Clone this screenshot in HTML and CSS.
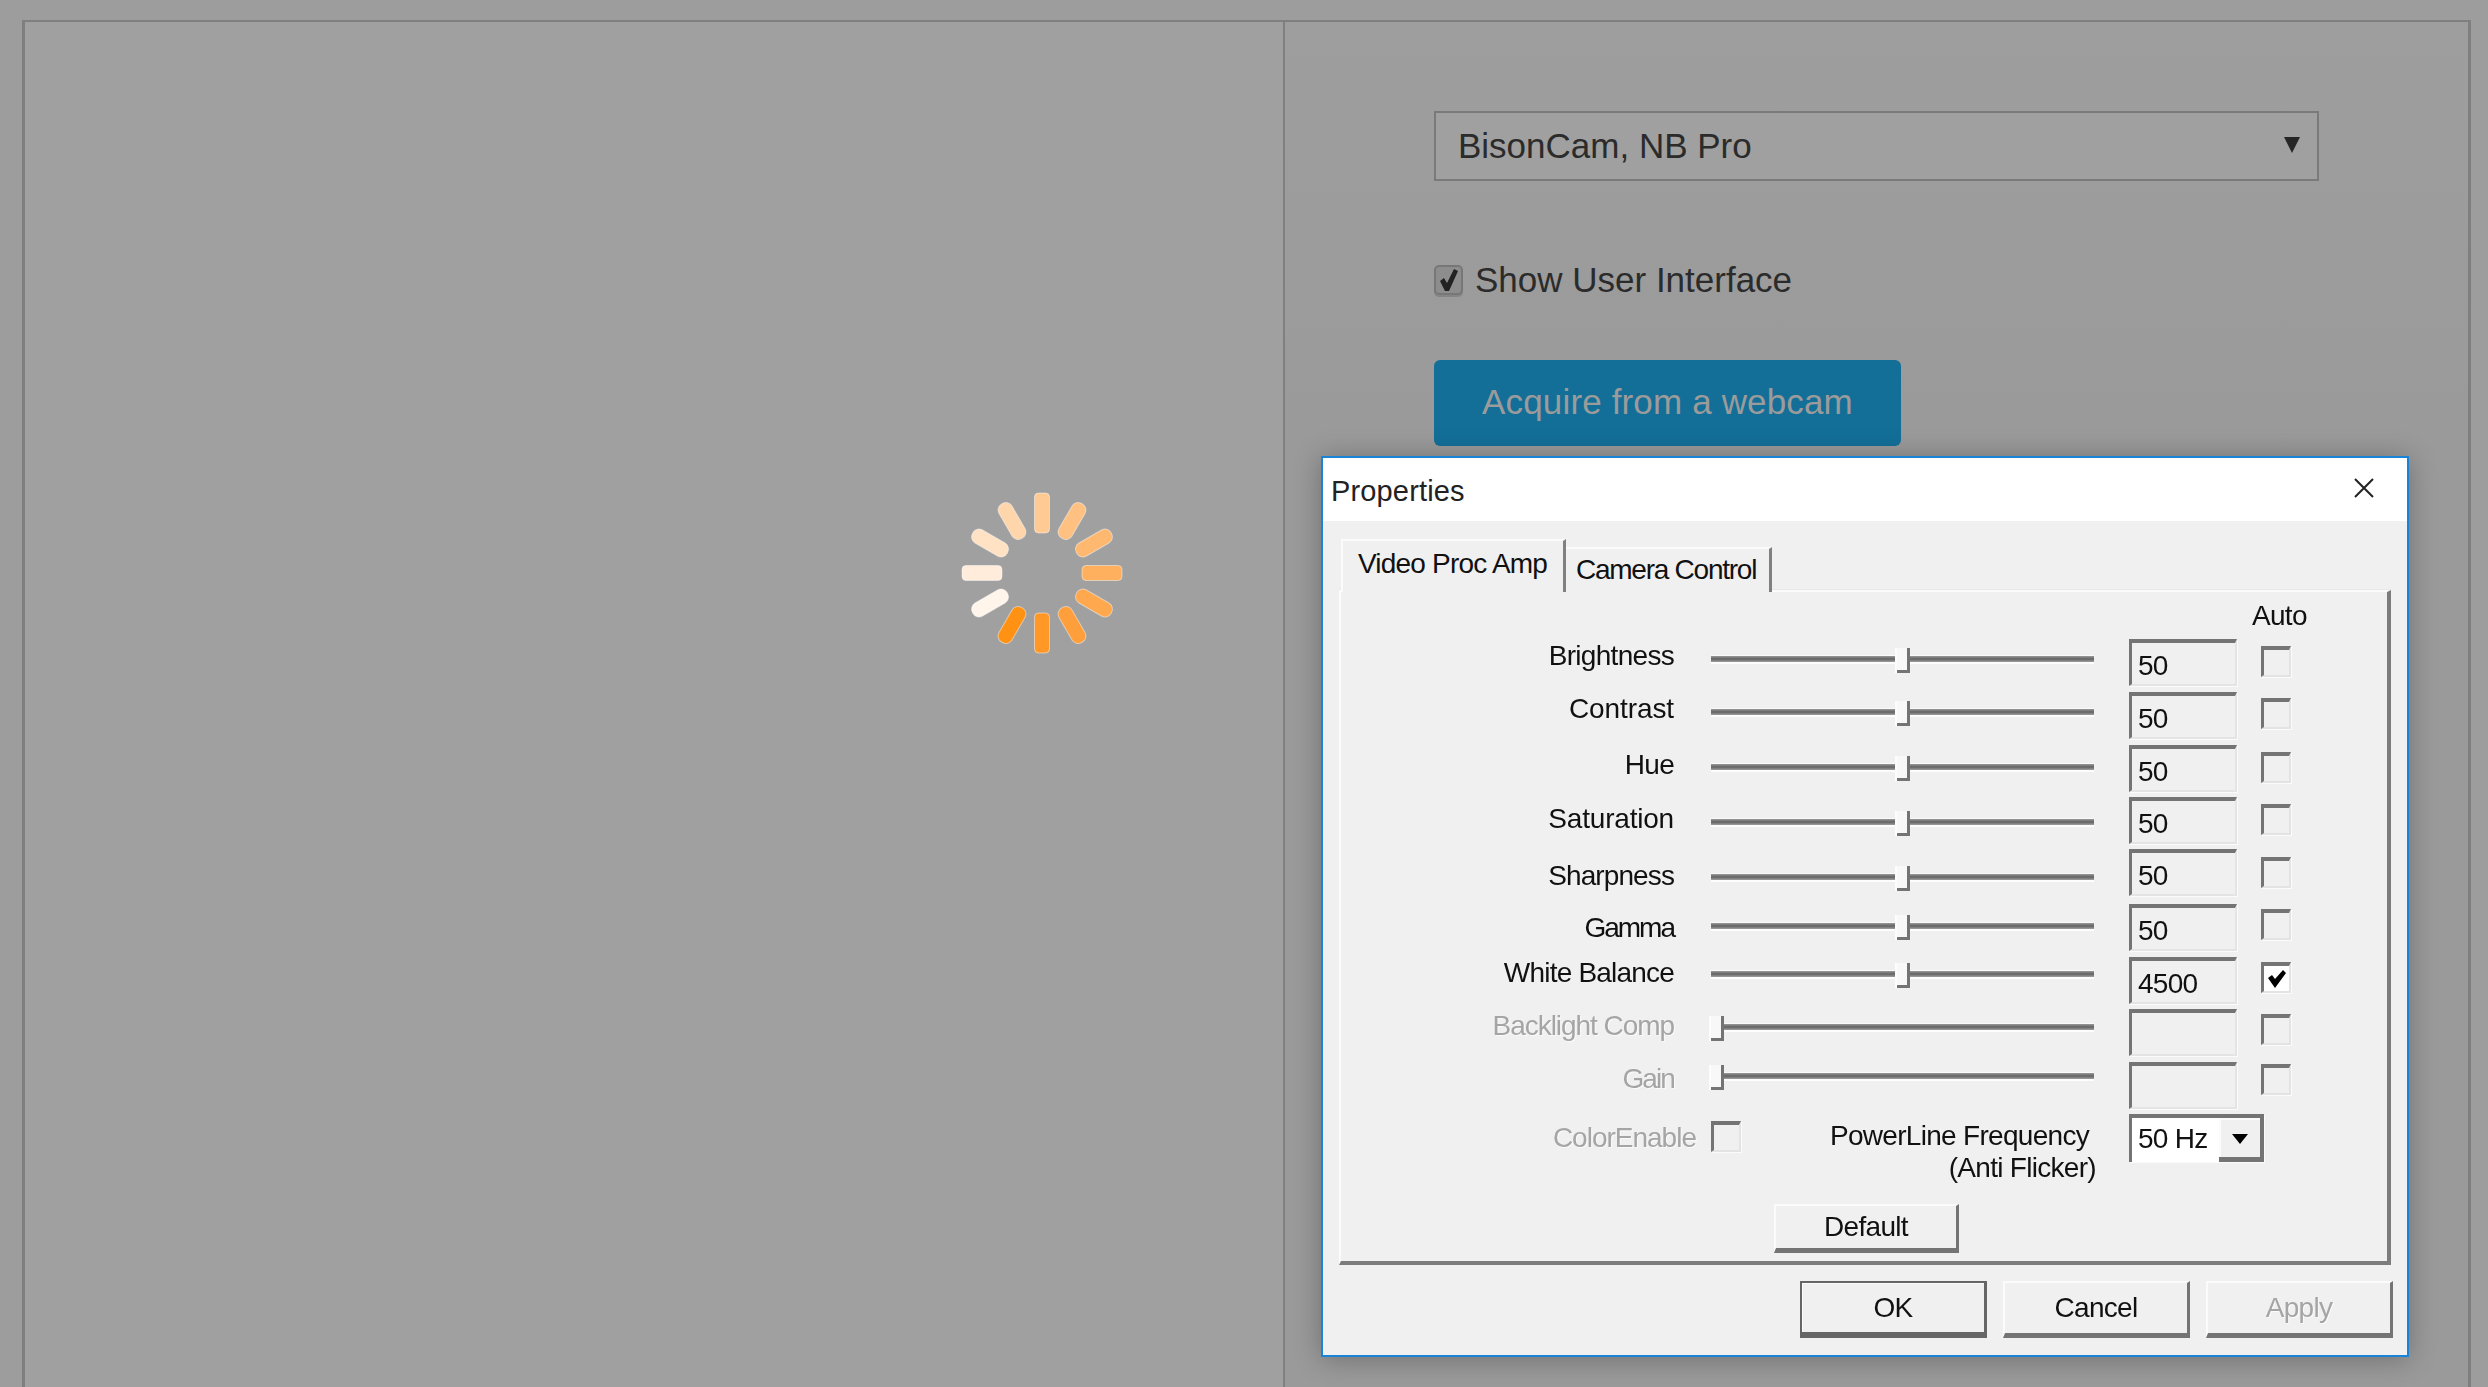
FILE: index.html
```html
<!DOCTYPE html>
<html lang="en">
<head>
<meta charset="utf-8">
<title>Properties</title>
<link rel="stylesheet" href="styles.css">
</head>
<body>
<main class="frame">
  <section class="left">
    <svg class="spinner" viewBox="-82 -82 164 164" width="164" height="164" aria-hidden="true">
      <rect class="bar" x="-7.5" y="-80" width="15" height="40" rx="4" fill="#ffca94"/>
      <rect class="bar" x="-7.5" y="-80" width="15" height="40" rx="7" fill="#ffc182" transform="rotate(30)"/>
      <rect class="bar" x="-7.5" y="-80" width="15" height="40" rx="7" fill="#ffb870" transform="rotate(60)"/>
      <rect class="bar" x="-7.5" y="-80" width="15" height="40" rx="4" fill="#ffb05f" transform="rotate(90)"/>
      <rect class="bar" x="-7.5" y="-80" width="15" height="40" rx="7" fill="#ffa84e" transform="rotate(120)"/>
      <rect class="bar" x="-7.5" y="-80" width="15" height="40" rx="7" fill="#ff9f3b" transform="rotate(150)"/>
      <rect class="bar" x="-7.5" y="-80" width="15" height="40" rx="4" fill="#ff9827" transform="rotate(180)"/>
      <rect class="bar" x="-7.5" y="-80" width="15" height="40" rx="7" fill="#ff9213" transform="rotate(210)"/>
      <rect class="bar" x="-7.5" y="-80" width="15" height="40" rx="7" fill="#fff5ea" transform="rotate(240)"/>
      <rect class="bar" x="-7.5" y="-80" width="15" height="40" rx="4" fill="#ffecda" transform="rotate(270)"/>
      <rect class="bar" x="-7.5" y="-80" width="15" height="40" rx="7" fill="#ffe1c4" transform="rotate(300)"/>
      <rect class="bar" x="-7.5" y="-80" width="15" height="40" rx="7" fill="#ffd5ac" transform="rotate(330)"/>
    </svg>
  </section>
  <section class="right">
    <div class="select">
      <span>BisonCam, NB Pro</span>
      <svg class="select-arrow" viewBox="0 0 16 16" width="16" height="16" aria-hidden="true"><path d="M0 0H16L8 16Z"/></svg>
    </div>
    <label class="show-ui">
      <span class="page-check">
        <svg viewBox="0 0 20 22" width="20" height="22" aria-hidden="true"><path d="M1 12l4-3 3 5 7-14 4 2-9 20h-4z"/></svg>
      </span>
      <span>Show User Interface</span>
    </label>
    <button class="acquire" type="button">Acquire from a webcam</button>
  </section>
</main>

<div class="dialog">
  <header class="titlebar">
    <span class="title">Properties</span>
    <svg class="close" viewBox="0 0 20 20" width="20" height="20" aria-hidden="true"><path d="M1 1L19 19M19 1L1 19"/></svg>
  </header>
  <div class="dialog-body">
    <div class="tabs">
      <div class="tab tab-active">Video Proc Amp</div>
      <div class="tab">Camera Control</div>
    </div>
    <div class="panel">
      <div class="auto-head">Auto</div>

      <div class="row r1">
        <div class="label">Brightness</div>
        <div class="slider"><div class="track"></div><div class="thumb"></div></div>
        <div class="edit">50</div>
        <div class="check"></div>
      </div>
      <div class="row r2">
        <div class="label">Contrast</div>
        <div class="slider"><div class="track"></div><div class="thumb"></div></div>
        <div class="edit">50</div>
        <div class="check"></div>
      </div>
      <div class="row r3">
        <div class="label">Hue</div>
        <div class="slider"><div class="track"></div><div class="thumb"></div></div>
        <div class="edit">50</div>
        <div class="check"></div>
      </div>
      <div class="row r4">
        <div class="label">Saturation</div>
        <div class="slider"><div class="track"></div><div class="thumb"></div></div>
        <div class="edit">50</div>
        <div class="check"></div>
      </div>
      <div class="row r5">
        <div class="label">Sharpness</div>
        <div class="slider"><div class="track"></div><div class="thumb"></div></div>
        <div class="edit">50</div>
        <div class="check"></div>
      </div>
      <div class="row r6">
        <div class="label">Gamma</div>
        <div class="slider"><div class="track"></div><div class="thumb"></div></div>
        <div class="edit">50</div>
        <div class="check"></div>
      </div>
      <div class="row r7">
        <div class="label">White Balance</div>
        <div class="slider"><div class="track"></div><div class="thumb"></div></div>
        <div class="edit">4500</div>
        <div class="check check-on">
          <svg viewBox="0 0 20 18" width="20" height="18" aria-hidden="true"><path d="M1 8l4-3 3 4 8-9 3 3-11 15z"/></svg>
        </div>
      </div>
      <div class="row r8 row-off">
        <div class="label">Backlight Comp</div>
        <div class="slider slider-min"><div class="track"></div><div class="thumb"></div></div>
        <div class="edit"></div>
        <div class="check"></div>
      </div>
      <div class="row r9 row-off">
        <div class="label">Gain</div>
        <div class="slider slider-min"><div class="track"></div><div class="thumb"></div></div>
        <div class="edit"></div>
        <div class="check"></div>
      </div>

      <div class="extra">
        <div class="color-enable">ColorEnable</div>
        <div class="check color-check"></div>
        <div class="powerline">
          <div class="pl-line1">PowerLine Frequency</div>
          <div class="pl-line2">(Anti Flicker)</div>
        </div>
        <div class="combo">
          <span class="combo-value">50 Hz</span>
          <span class="combo-btn"><svg viewBox="0 0 16 10" width="16" height="10" aria-hidden="true"><path d="M0 0H16L8 10Z"/></svg></span>
        </div>
      </div>

      <div class="default-row"><div class="win-btn btn-default">Default</div></div>
    </div>
    <div class="actions">
      <div class="win-btn btn-ok">OK</div>
      <div class="win-btn">Cancel</div>
      <div class="win-btn btn-disabled">Apply</div>
    </div>
  </div>
</div>
</body>
</html>
```

FILE: styles.css
```css
* { box-sizing: border-box; }
html, body { height: 100%; }
body {
  margin: 0;
  overflow: hidden;
  height: 1387px;
  background: #9d9d9d;
  font-family: "Liberation Sans", Arial, sans-serif;
}

/* page behind the dialog */
.frame {
  margin: 20px 17px 0 22px;
  height: 1367px;
  display: flex;
  border: solid #7f7f7f;
  border-width: 2px 3px 0 3px;
}
.left {
  width: 1260px;
  flex: none;
  padding: 469px 0 0 935px;
  background: #a0a0a0;
  border-right: 2px solid #808080;
}
.spinner { display: block; }
.bar { stroke: rgba(255, 255, 255, .45); stroke-width: 1; }

.right {
  flex: 1;
  padding: 89px 0 0 149px;
  background: linear-gradient(#9e9e9e, #9a9a9a 430px);
}
.select {
  width: 885px;
  height: 70px;
  display: flex;
  align-items: center;
  justify-content: space-between;
  padding: 0 17px 1px 22px;
  border: 2px solid #7a7a7a;
  background: #a0a0a0;
  color: #2b2b2b;
  font-size: 35px;
}
.select-arrow { fill: #262626; margin-top: -1px; }
.show-ui {
  display: flex;
  align-items: center;
  gap: 12px;
  margin-top: 84px;
  height: 30px;
  color: #2b2b2b;
  font-size: 35px;
}
.page-check {
  width: 29px;
  height: 30px;
  display: flex;
  align-items: center;
  justify-content: center;
  background: #8d8d8d;
  border: 2px solid #777;
  border-radius: 5px;
  box-shadow: 0 2px 0 #858585;
}
.page-check svg { fill: #222; }
.acquire {
  display: block;
  margin-top: 65px;
  width: 467px;
  height: 86px;
  padding: 0 0 2px;
  border: 0;
  border-radius: 6px;
  background: #136f98;
  color: #9b9b9b;
  font-family: inherit;
  font-size: 35px;
  letter-spacing: .15px;
  text-align: center;
}

/* modal window */
.dialog {
  position: absolute;
  left: 1321px;
  top: 456px;
  width: 1088px;
  height: 901px;
  display: flex;
  flex-direction: column;
  border: 2px solid #1883d7;
  background: #f0f0f0;
  box-shadow: 0 2px 26px rgba(0, 0, 0, .28);
  color: #111;
  font-size: 28px;
  letter-spacing: -.7px;
}
.titlebar {
  height: 63px;
  flex: none;
  display: flex;
  align-items: center;
  justify-content: space-between;
  padding: 4px 33px 0 8px;
  background: #fff;
}
.title {
  font-size: 29px;
  letter-spacing: .15px;
  color: #222;
}
.close { margin-top: -8px; fill: none; stroke: #222; stroke-width: 2; }

.dialog-body {
  flex: 1;
  padding: 18px 0 0 16px;
  filter: blur(.45px);
}
.tabs {
  display: flex;
  align-items: flex-end;
  height: 53px;
  margin-left: 2px;
  position: relative;
  z-index: 1;
  margin-bottom: -2px;
}
.tab {
  width: 206px;
  height: 45px;
  padding: 6px 0 0 10px;
  line-height: 30px;
  letter-spacing: -1.25px;
  border-right: 3px solid #808080;
  border-top: 2px solid #fbfbfb;
  background: #f0f0f0;
}
.tab-active {
  width: 225px;
  height: 53px;
  padding: 8px 0 0 15px;
  letter-spacing: -.8px;
  border-left: 2px solid #fbfbfb;
}
.panel {
  width: 1052px;
  height: 675px;
  padding: 9px 0 0 0;
  border: solid #fbfbfb;
  border-width: 2px 4px 4px 2px;
  border-right-color: #7c7c7c;
  border-bottom-color: #7c7c7c;
  box-shadow: 0 -1px 0 #e8e8e8;
}
.auto-head {
  height: 30px;
  margin: 0 0 8px 911px;
  line-height: 30px;
}

.row {
  display: grid;
  grid-template-columns: 333px 383px 108px 30px;
  column-gap: 37px;
  align-items: start;
}
.r1 { height: 53px; --l: 2px; --s: 9px; --c: 7px; --ls: -.7px; }
.r2 { height: 53px; --l: 2px; --s: 9px; --c: 6px; --ls: -.1px; }
.r3 { height: 52px; --l: 5px; --s: 11px; --c: 7px; --ls: -.7px; }
.r4 { height: 52px; --l: 7px; --s: 14px; --c: 7px; --ls: -.2px; }
.r5 { height: 55px; --l: 12px; --s: 17px; --c: 8px; --ls: -.9px; }
.r6 { height: 53px; --l: 9px; --s: 11px; --c: 5px; --ls: -2px; }
.r7 { height: 52px; --l: 1px; --s: 6px; --c: 5px; --ls: -.8px; }
.r8 { height: 53px; --l: 2px; --s: 7px; --c: 5px; --ls: -1.05px; }
.r9 { height: 52px; --l: 2px; --s: 3px; --c: 2px; --ls: -1.9px; }

.label {
  margin-top: var(--l);
  line-height: 30px;
  letter-spacing: var(--ls);
  text-align: right;
  white-space: nowrap;
}
.slider {
  position: relative;
  height: 25px;
  margin-top: var(--s);
}
.track {
  position: absolute;
  left: 0;
  right: 0;
  top: 8px;
  height: 6px;
  background: linear-gradient(#9a9a9a, #626262 50%, #a0a0a0);
  box-shadow: 0 2px 0 #fdfdfd, 0 -1px 0 #fafafa;
}
.thumb {
  position: absolute;
  left: 186px;
  top: 0;
  width: 13px;
  height: 25px;
  background: #f8f8f8;
  border: solid #747474;
  border-width: 0 3px 3px 0;
  box-shadow: -2px 0 0 #fdfdfd;
}
.slider-min .thumb { left: 0; }
.edit {
  width: 108px;
  height: 47px;
  margin-left: -2px;
  padding: 8px 0 0 6px;
  line-height: 30px;
  border: solid #747474;
  border-width: 4px 2px 2px 3px;
  border-right-color: #e4e4e4;
  border-bottom-color: #e4e4e4;
  box-shadow: 1px 1px 0 #fbfbfb;
}
.check {
  width: 30px;
  height: 31px;
  margin-top: var(--c);
  margin-left: -15px;
  display: flex;
  align-items: center;
  justify-content: center;
  border: solid #747474;
  border-width: 4px 2px 2px 3px;
  border-right-color: #e3e3e3;
  border-bottom-color: #e3e3e3;
  box-shadow: 1px 1px 0 #fbfbfb;
}
.check-on { background: #fff; }
.check-on svg { fill: #000; }
.row-off .label, .color-enable { color: #a5a5a5; text-shadow: 1px 1px 0 #fafafa; }

.extra {
  display: flex;
  align-items: flex-start;
  height: 90px;
}
.color-enable {
  width: 355px;
  margin-top: 9px;
  line-height: 30px;
  letter-spacing: -1px;
  text-align: right;
}
.color-check { margin: 7px 0 0 15px; flex: none; }
.powerline {
  width: 355px;
  margin-top: 1px;
  text-align: right;
  line-height: 32px;
  white-space: nowrap;
}
.pl-line1 { padding-right: 7px; margin-top: 5px; }
.combo {
  width: 135px;
  height: 48px;
  margin-left: 33px;
  display: flex;
  border: solid #747474;
  border-width: 4px 4px 0 3px;
  box-shadow: 1px 1px 0 #fbfbfb;
  background: #fff;
}
.combo-value {
  flex: 1;
  padding: 6px 0 0 6px;
  line-height: 30px;
  white-space: nowrap;
}
.combo-btn {
  width: 41px;
  display: flex;
  align-items: center;
  justify-content: center;
  background: #f0f0f0;
  border: solid #747474;
  border-width: 2px 0 5px 0;
  border-top-color: #fbfbfb;
  box-shadow: inset 2px 0 0 #fbfbfb;
}
.combo-btn svg { fill: #000; }

.default-row { padding-left: 433px; }
.win-btn {
  width: 187px;
  height: 57px;
  display: flex;
  align-items: center;
  justify-content: center;
  border: solid #fbfbfb;
  border-width: 2px 3px 5px 2px;
  border-right-color: #747474;
  border-bottom-color: #747474;
  background: #f0f0f0;
}
.btn-default { width: 185px; height: 49px; }
.actions {
  display: flex;
  justify-content: flex-end;
  gap: 16px;
  width: 1054px;
  margin-top: 16px;
}
.btn-ok {
  border: 2px solid #666;
  border-bottom-width: 6px;
  border-right-width: 3px;
  box-shadow: inset 1px 1px 0 #fbfbfb;
}
.btn-disabled { color: #a5a5a5; text-shadow: 1px 1px 0 #fafafa; }
```
